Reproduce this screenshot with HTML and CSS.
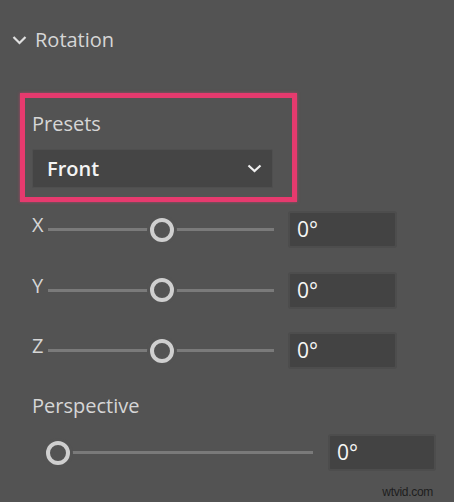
FILE: index.html
```html
<!DOCTYPE html>
<html>
<head>
<meta charset="utf-8">
<link rel="stylesheet" href="styles.css">
</head>
<body>
<div class="panel">
  <div class="section-head">
    <svg class="chev" width="15" height="10" viewBox="0 0 15 10"><path d="M1.5 2 L7.5 8 L13.5 2" fill="none" stroke="#e0e0e0" stroke-width="2.2"/></svg>
    <span class="section-title">Rotation</span>
  </div>

  <div class="highlight">
    <div class="field-label">Presets</div>
    <div class="dropdown">
      <span class="dropdown-value">Front</span>
      <svg class="dd-chev" width="15" height="9" viewBox="0 0 15 9"><path d="M1.5 1.5 L7.5 7 L13.5 1.5" fill="none" stroke="#f0f0f0" stroke-width="2.2"/></svg>
    </div>
  </div>

  <div class="axes">
    <div class="axis-row">
      <span class="axis-label">X</span>
      <div class="slider"><div class="track"></div><div class="thumb center"></div></div>
      <div class="num-input">0°</div>
    </div>
    <div class="axis-row">
      <span class="axis-label">Y</span>
      <div class="slider"><div class="track"></div><div class="thumb center"></div></div>
      <div class="num-input">0°</div>
    </div>
    <div class="axis-row">
      <span class="axis-label">Z</span>
      <div class="slider"><div class="track"></div><div class="thumb center"></div></div>
      <div class="num-input">0°</div>
    </div>
  </div>

  <div class="field-label persp-label">Perspective</div>
  <div class="persp-row">
    <div class="slider wide"><div class="track"></div><div class="thumb start"></div></div>
    <div class="num-input persp-input">0°</div>
  </div>

  <div class="watermark">wtvid.com</div>
</div>
</body>
</html>
```

FILE: styles.css
```css
html, body {
  margin: 0;
  padding: 0;
  background: #535353;
}
body {
  width: 454px;
  height: 502px;
  overflow: hidden;
  font-family: "Open Sans", "Noto Sans", sans-serif;
  color: #d2d2d2;
}
.panel {
  position: relative;
  height: 502px;
  padding-top: 28px;
  box-sizing: border-box;
}
.section-head {
  display: flex;
  align-items: center;
  height: 24px;
  padding-left: 12px;
}
.chev {
  margin-right: 8px;
}
.section-title {
  font-size: 20px;
  font-weight: 500;
  line-height: 24px;
  color: #d6d6d6;
}
.highlight {
  margin-top: 41px;
  margin-left: 20px;
  width: 277px;
  height: 109px;
  box-sizing: border-box;
  border: 5px solid #e63a6e;
  box-shadow: 0 0 3px rgba(230, 58, 110, 0.6);
  padding: 14px 19px 0 7px;
}
.field-label {
  font-size: 20px;
  font-weight: 500;
  line-height: 24px;
  color: #d6d6d6;
}
.dropdown {
  margin-top: 13px;
  height: 39px;
  box-sizing: border-box;
  border: 1px solid #4f4f4f;
  background: #454545;
  border-radius: 2px;
  display: flex;
  align-items: center;
  justify-content: space-between;
  padding: 0 10px 0 14px;
}
.dropdown-value {
  font-size: 20px;
  font-weight: 600;
  color: #f4f4f4;
  line-height: 24px;
}
.axes {
  margin-top: 9px;
  display: flex;
  flex-direction: column;
  gap: 23.5px;
}
.axis-row {
  display: flex;
  align-items: center;
  height: 37px;
  padding-left: 32px;
}
.axis-label {
  width: 16px;
  font-size: 20px;
  font-weight: 500;
  line-height: 24px;
  color: #d6d6d6;
  margin-bottom: 9px;
}
.slider {
  position: relative;
  width: 226px;
  height: 26px;
  display: flex;
  align-items: center;
}
.track {
  width: 100%;
  height: 3px;
  background: #7a7a7a;
}
.thumb {
  position: absolute;
  top: 1px;
  width: 24px;
  height: 24px;
  box-sizing: border-box;
  border-radius: 50%;
  border: 4px solid #cfcfcf;
  background: #535353;
  box-shadow: 0 0 0 3px #535353;
}
.thumb.center {
  left: 102px;
}
.thumb.start {
  left: 0;
}
.num-input {
  margin-left: 14px;
  width: 109px;
  height: 37px;
  box-sizing: border-box;
  background: #434343;
  border: 2px solid #4d4d4d;
  border-radius: 3px;
  font-size: 21px;
  font-weight: 500;
  line-height: 24px;
  color: #f6f6f6;
  padding: 4px 0 0 7px;
}
.persp-label {
  margin-top: 25px;
  padding-left: 32px;
}
.persp-row {
  margin-top: 16px;
  display: flex;
  align-items: center;
  height: 37px;
  padding-left: 46px;
}
.slider.wide {
  width: 267px;
}
.persp-input {
  margin-left: 15px;
  width: 108px;
}
.watermark {
  position: absolute;
  right: 21px;
  bottom: 3px;
  font-family: "Liberation Sans", Arial, sans-serif;
  font-size: 12px;
  letter-spacing: -0.3px;
  color: #1e1e1e;
}
```
